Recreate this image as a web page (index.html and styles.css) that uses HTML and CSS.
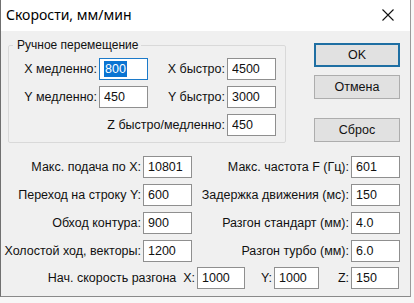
FILE: index.html
```html
<!DOCTYPE html>
<html>
<head>
    <title>Скорости, мм/мин</title>
    <link rel="stylesheet" href="styles.css">
</head>
<body>
    <div class="window">
        <div class="titlebar">
            <span class="title">Скорости, мм/мин</span>
            <svg class="close" width="12" height="12" viewBox="0 0 12 12">
                <path d="M0.5 0.5 L11.5 11.5 M11.5 0.5 L0.5 11.5" stroke="#111" stroke-width="1.1" fill="none"/>
            </svg>
        </div>
        <div class="content">
            <div class="top">
                <fieldset class="group">
                    <legend>Ручное перемещение</legend>
                    <div class="group-grid">
                        <label>X медленно:</label>
                        <div class="field focus"><span class="sel">800</span></div>
                        <label>X быстро:</label>
                        <input type="text" value="4500">

                        <label>Y медленно:</label>
                        <input type="text" value="450">
                        <label>Y быстро:</label>
                        <input type="text" value="3000">

                        <label class="wide">Z быстро/медленно:</label>
                        <input type="text" value="450">
                    </div>
                </fieldset>
                <div class="buttons">
                    <button class="default">OK</button>
                    <button>Отмена</button>
                    <button class="reset">Сброс</button>
                </div>
            </div>

            <div class="params">
                <label>Макс. подача по X:</label>
                <input type="text" value="10801">
                <label>Макс. частота F (Гц):</label>
                <input type="text" value="601">

                <label>Переход на строку Y:</label>
                <input type="text" value="600">
                <label>Задержка движения (мс):</label>
                <input type="text" value="150">

                <label>Обход контура:</label>
                <input type="text" value="900">
                <label>Разгон стандарт (мм):</label>
                <input type="text" value="4.0">

                <label>Холостой ход, векторы:</label>
                <input type="text" value="1200">
                <label>Разгон турбо (мм):</label>
                <input type="text" value="6.0">
            </div>

            <div class="accel">
                <label>Нач. скорость разгона&nbsp;&nbsp;X:</label>
                <input type="text" value="1000">
                <label>Y:</label>
                <input type="text" value="1000">
                <label>Z:</label>
                <input type="text" value="150">
            </div>
        </div>
    </div>
</body>
</html>
```

FILE: styles.css
```css
body {
    margin: 0;
    background-color: #f7f7f7;
    font-family: "Liberation Sans", Arial, sans-serif;
    font-size: 12.5px;
    color: #111;
}
.window {
    width: 409px;
    height: 296px;
    border-left: 1px solid #707070;
    border-right: 1px solid #9a9a9a;
    border-bottom: 1px solid #8a8a8a;
    background-color: #f0f0f0;
}
.titlebar {
    height: 31px;
    background-color: #fff;
    display: flex;
    align-items: center;
    justify-content: space-between;
    padding: 0 16px 0 5px;
}
.title {
    font-family: "Noto Sans", sans-serif;
    font-size: 14px;
    color: #000;
    margin-top: -2px;
}
.close {
    margin-top: -1px;
}
.content {
    padding-top: 7px;
}
.top {
    display: flex;
    align-items: flex-start;
}
.group {
    margin: 0 0 0 7px;
    padding: 6px 9px 6px 0;
    border: 1px solid #d9d9d9;
    border-radius: 2px;
    width: 267px;
}
.group legend {
    margin-left: 4px;
    padding: 0 3px 0 4px;
    line-height: 14px;
    font-size: 12px;
}
.group-grid {
    display: grid;
    grid-template-columns: 90px 49px 79px 49px;
    grid-auto-rows: 22px;
    row-gap: 6px;
    align-items: center;
}
label {
    text-align: right;
    padding-right: 2px;
    white-space: nowrap;
}
.wide {
    grid-column: 1 / 4;
}
input[type="text"], .field {
    box-sizing: border-box;
    height: 22px;
    width: 100%;
    margin: 0;
    padding: 0 0 0 4px;
    border: 1px solid #8f8f8f;
    background-color: #fff;
    font-family: "Liberation Sans", Arial, sans-serif;
    font-size: 12.5px;
    color: #111;
}
.field {
    display: flex;
    align-items: center;
}
.focus {
    border-color: #1c7ac9;
}
.sel {
    background-color: #0a74d2;
    color: #fff;
    line-height: 16px;
    padding: 0 1px;
}
.buttons {
    display: flex;
    flex-direction: column;
    gap: 8px;
    margin-left: 28px;
    padding-top: 5px;
}
button {
    box-sizing: border-box;
    width: 86px;
    height: 24px;
    margin: 0;
    border: 1px solid #adadad;
    background-color: #e1e1e1;
    font-family: "Liberation Sans", Arial, sans-serif;
    font-size: 12.5px;
    color: #111;
}
button.default {
    border: 2px solid #1f6fa3;
}
button.reset {
    margin-top: 11px;
}
.params {
    display: grid;
    grid-template-columns: 142px 49px 159px 49px;
    grid-auto-rows: 22px;
    row-gap: 6px;
    align-items: center;
    margin-top: 13px;
}
.accel {
    display: grid;
    grid-template-columns: 196px 48px 29px 45px 32px 48px;
    height: 22px;
    align-items: center;
    margin-top: 5px;
}
```
